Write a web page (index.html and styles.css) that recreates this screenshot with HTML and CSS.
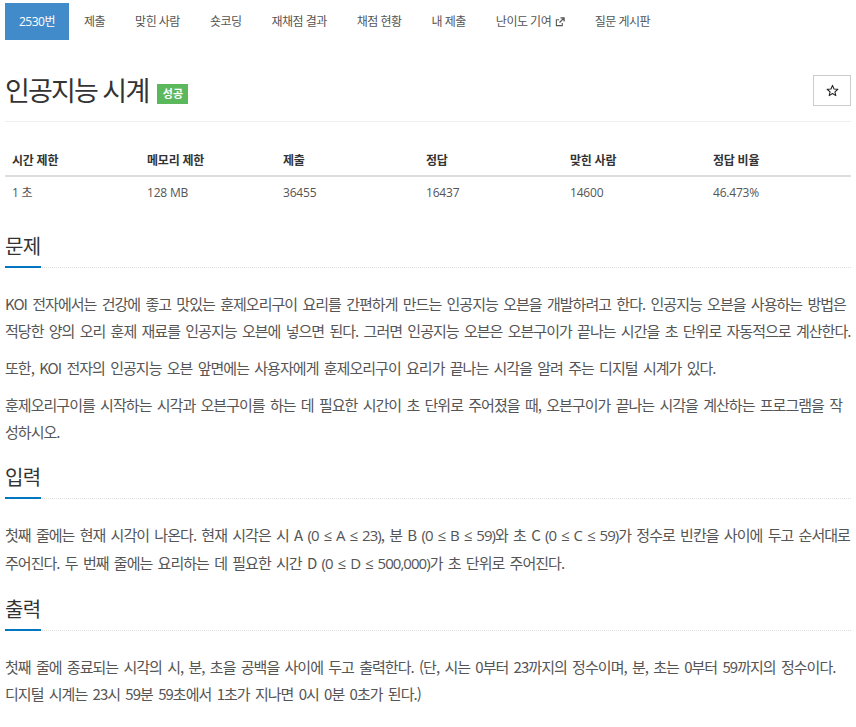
FILE: index.html
```html
<!DOCTYPE html>
<html lang="ko">
<head>
    <meta charset="UTF-8">
    <title>2530번: 인공지능 시계</title>
    <link rel="stylesheet" href="styles.css">
</head>
<body>
    <div class="container">
        <ul class="problem-menu">
            <li class="active"><a href="#">2530번</a></li>
            <li><a href="#">제출</a></li>
            <li><a href="#">맞힌 사람</a></li>
            <li><a href="#">숏코딩</a></li>
            <li><a href="#">재채점 결과</a></li>
            <li><a href="#">채점 현황</a></li>
            <li><a href="#">내 제출</a></li>
            <li><a href="#">난이도 기여 <svg class="ext" width="10" height="10" viewBox="0 0 11 11"><path d="M8 6.5v3H1.5V3h3" fill="none" stroke="#555" stroke-width="1.2"/><path d="M6 1h4v4M10 1L5 6" fill="none" stroke="#555" stroke-width="1.4"/></svg></a></li>
            <li><a href="#">질문 게시판</a></li>
        </ul>

        <div class="page-header">
            <h1><span class="title">인공지능 시계</span> <span class="label-success">성공</span></h1>
            <button class="star-btn" title="즐겨찾기">
                <svg width="13" height="13" viewBox="0 0 24 24"><path d="M12 2.5l2.8 6.6 7.1.6-5.4 4.7 1.6 7-6.1-3.7-6.1 3.7 1.6-7-5.4-4.7 7.1-.6z" fill="none" stroke="#222" stroke-width="2" stroke-linejoin="round"/></svg>
            </button>
        </div>

        <table class="problem-info">
            <thead>
                <tr>
                    <th class="c1">시간 제한</th>
                    <th class="c2">메모리 제한</th>
                    <th class="c3">제출</th>
                    <th class="c4">정답</th>
                    <th class="c5">맞힌 사람</th>
                    <th>정답 비율</th>
                </tr>
            </thead>
            <tbody>
                <tr>
                    <td>1 초 </td>
                    <td>128 MB</td>
                    <td>36455</td>
                    <td>16437</td>
                    <td>14600</td>
                    <td>46.473%</td>
                </tr>
            </tbody>
        </table>

        <section class="problem-section">
            <div class="headline"><h2><span>문제</span></h2></div>
            <div class="problem-text">
                <p>KOI 전자에서는 건강에 좋고 맛있는 훈제오리구이 요리를 간편하게 만드는 인공지능 오븐을 개발하려고 한다. 인공지능 오븐을 사용하는 방법은 적당한 양의 오리 훈제 재료를 인공지능 오븐에 넣으면 된다. 그러면 인공지능 오븐은 오븐구이가 끝나는 시간을 초 단위로 자동적으로 계산한다.</p>
                <p>또한, KOI 전자의 인공지능 오븐 앞면에는 사용자에게 훈제오리구이 요리가 끝나는 시각을 알려 주는 디지털 시계가 있다.</p>
                <p>훈제오리구이를 시작하는 시각과 오븐구이를 하는 데 필요한 시간이 초 단위로 주어졌을 때, 오븐구이가 끝나는 시각을 계산하는 프로그램을 작성하시오.</p>
            </div>
        </section>

        <section class="problem-section">
            <div class="headline"><h2><span>입력</span></h2></div>
            <div class="problem-text">
                <p>첫째 줄에는 현재 시각이 나온다. 현재 시각은 시 A <span class="math">(0 ≤ A ≤ 23)</span>, 분 B <span class="math">(0 ≤ B ≤ 59)</span>와 초 C <span class="math">(0 ≤ C ≤ 59)</span>가 정수로 빈칸을 사이에 두고 순서대로 주어진다. 두 번째 줄에는 요리하는 데 필요한 시간 D <span class="math">(0 ≤ D ≤ 500,000)</span>가 초 단위로 주어진다.</p>
            </div>
        </section>

        <section class="problem-section">
            <div class="headline"><h2><span>출력</span></h2></div>
            <div class="problem-text">
                <p>첫째 줄에 종료되는 시각의 시, 분, 초을 공백을 사이에 두고 출력한다. (단, 시는 0부터 23까지의 정수이며, 분, 초는 0부터 59까지의 정수이다. 디지털 시계는 23시 59분 59초에서 1초가 지나면 0시 0분 0초가 된다.)</p>
            </div>
        </section>
    </div>
</body>
</html>
```

FILE: styles.css
```css
* {
    box-sizing: border-box;
}
body {
    margin: 0;
    font-family: "Open Sans", "Noto Sans CJK KR", sans-serif;
    color: #555;
    background: #fff;
}
.container {
    padding: 0 5px;
}
.problem-menu {
    display: flex;
    list-style: none;
    margin: 3px 0 0;
    padding: 0;
}
.problem-menu a {
    display: block;
    padding: 10px 15px;
    font-size: 12px;
    line-height: 17px;
    color: #555;
    text-decoration: none;
    letter-spacing: -0.5px;
}
.problem-menu .active a {
    background: #428bca;
    color: #fff;
    padding: 10px 14px;
}
.ext {
    vertical-align: -1px;
    margin-left: 1px;
}
.page-header {
    display: flex;
    justify-content: space-between;
    align-items: center;
    margin-top: 35px;
    padding-bottom: 15px;
    border-bottom: 1px solid #eee;
}
.page-header h1 {
    margin: 0;
    font-size: 27px;
    line-height: 31px;
    font-weight: 400;
    color: #333;
    display: flex;
    align-items: center;
    letter-spacing: -1.8px;
}
.label-success {
    background: #5cb85c;
    color: #fff;
    font-size: 11px;
    font-weight: 700;
    letter-spacing: 0;
    width: 31px;
    height: 20px;
    line-height: 20px;
    text-align: center;
    margin-left: 9px;
    margin-top: 6px;
}
.star-btn {
    width: 38px;
    height: 31px;
    background: #fff;
    border: 1px solid #ccc;
    padding: 0;
    display: flex;
    align-items: center;
    justify-content: center;
}
.problem-info {
    width: 100%;
    border-collapse: collapse;
    margin-top: 21px;
    margin-bottom: 22px;
    font-size: 12px;
    letter-spacing: -0.2px;
}
.problem-info th {
    text-align: left;
    color: #333;
    padding: 9px 7px 5px;
    line-height: 18px;
    border-bottom: 2px solid #ddd;
}
.problem-info td {
    padding: 7px 7px 8px;
    line-height: 18px;
}
.c1 { width: 135px; }
.c2 { width: 136px; }
.c3 { width: 143px; }
.c4 { width: 144px; }
.c5 { width: 143px; }
.problem-section {
    margin-top: 18px;
}
.problem-section:first-of-type {
    margin-top: 8px;
}
.headline {
    border-bottom: 1px dotted #ddd;
    margin-bottom: 22px;
}
.headline h2 {
    margin: 0 0 -1px;
    font-size: 20px;
    font-weight: 400;
    color: #333;
    line-height: 30px;
    display: inline-block;
    border-bottom: 2px solid #0076c0;
    letter-spacing: -0.6px;
    padding-bottom: 4px;
}
.problem-text p {
    margin: 0 0 10px;
    font-family: "Noto Sans CJK KR", sans-serif;
    font-size: 15px;
    line-height: 27px;
    letter-spacing: -0.96px;
    word-spacing: 2px;
}
.problem-text .math {
    font-family: "Open Sans", sans-serif;
}
```
